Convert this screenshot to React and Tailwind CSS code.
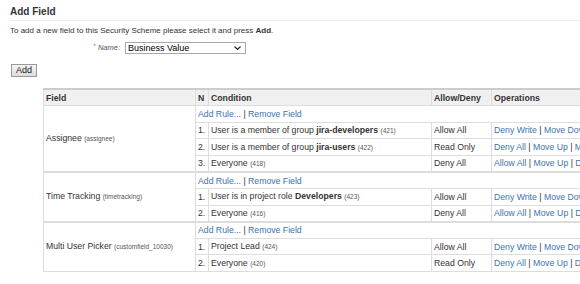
import React from 'react';

const groups = [
  {
    name: 'Assignee',
    key: 'assignee',
    rules: [
      { n: '1.', cond: <>User is a member of group <b>jira-developers</b></>, id: 421, access: 'Allow All', ops: ['Deny Write', 'Move Down', 'Delete'] },
      { n: '2.', cond: <>User is a member of group <b>jira-users</b></>, id: 422, access: 'Read Only', ops: ['Deny All', 'Move Up', 'Move Down', 'Delete'] },
      { n: '3.', cond: <>Everyone</>, id: 418, access: 'Deny All', ops: ['Allow All', 'Move Up', 'Delete'] },
    ],
  },
  {
    name: 'Time Tracking',
    key: 'timetracking',
    rules: [
      { n: '1.', cond: <>User is in project role <b>Developers</b></>, id: 423, access: 'Allow All', ops: ['Deny Write', 'Move Down', 'Delete'] },
      { n: '2.', cond: <>Everyone</>, id: 416, access: 'Deny All', ops: ['Allow All', 'Move Up', 'Delete'] },
    ],
  },
  {
    name: 'Multi User Picker',
    key: 'customfield_10030',
    rules: [
      { n: '1.', cond: <>Project Lead</>, id: 424, access: 'Allow All', ops: ['Deny Write', 'Move Down', 'Delete'] },
      { n: '2.', cond: <>Everyone</>, id: 420, access: 'Read Only', ops: ['Deny All', 'Move Up', 'Delete'] },
    ],
  },
];

function Links({ items }) {
  return (
    <span className="whitespace-nowrap">
      {items.map((t, i) => (
        <React.Fragment key={t}>
          {i > 0 && <span className="text-[#333]"> | </span>}
          <a className="text-[#3b73af]">{t}</a>
        </React.Fragment>
      ))}
    </span>
  );
}

export default function App() {
  const cell = 'border border-[#dddddd] px-[2px] h-[16.6px] py-0 leading-[12px] whitespace-nowrap overflow-hidden';
  return (
    <div className="w-[580px] h-[284px] overflow-hidden bg-white text-[#333] text-[8.7px] font-['Liberation_Sans',Arial,sans-serif]">
      <div className="pl-[10px] pt-[6px]">
        <h2 className="text-[10px] font-bold leading-[12px] text-[#333]">Add Field</h2>
        <div className="mt-[2px] border-t border-[#eeeeee]" />
        <p className="mt-[5px] text-[8px] leading-[10px]">
          To add a new field to this Security Scheme please select it and press <b>Add</b>.
        </p>
        <div className="mt-[6px] flex items-center h-[12px]">
          <label className="w-[112px] text-right pr-[2px] italic text-[7.5px] text-[#555]">
            <span className="text-[#d04437] not-italic text-[6px] align-top">*</span> Name:
          </label>
          <div className="ml-[3px] w-[121px] h-[12px] border border-[#a9a9a9] bg-white flex items-center justify-between pl-[2px] pr-[4px] text-[9px] text-black leading-none">
            <span>Business Value</span>
            <svg width="7" height="4" viewBox="0 0 7 4" fill="none" stroke="#222" strokeWidth="1.2">
              <path d="M0.5 0.5 L3.5 3.4 L6.5 0.5" />
            </svg>
          </div>
        </div>
        <button className="mt-[10px] ml-[1px] w-[26px] h-[13px] border border-[#999] bg-gradient-to-b from-[#f4f4f4] to-[#dcdcdc] text-[9px] leading-none text-[#222] flex items-center justify-center">
          Add
        </button>
      </div>
      <div className="pl-[43px] mt-[11px]">
        <table className="border-collapse w-[620px] table-fixed border-t-2 border-t-[#cccccc]">
          <colgroup>
            <col className="w-[152px]" />
            <col className="w-[13px]" />
            <col className="w-[223px]" />
            <col className="w-[60px]" />
            <col className="w-[172px]" />
          </colgroup>
          <thead>
            <tr className="bg-[#f0f0f0]">
              <th className={cell + ' text-left font-bold'}>Field</th>
              <th className={cell + ' text-left font-bold'}>N</th>
              <th className={cell + ' text-left font-bold'}>Condition</th>
              <th className={cell + ' text-left font-bold'}>Allow/Deny</th>
              <th className={cell + ' text-left font-bold'}>Operations</th>
            </tr>
          </thead>
          <tbody>
            {groups.map((g, gi) => (
              <React.Fragment key={g.key}>
                <tr className={gi > 0 ? 'border-t-2 border-t-[#dddddd]' : ''}>
                  <td rowSpan={g.rules.length + 1} className={cell + ' align-middle'}>
                    {g.name} <span className="text-[6.5px] text-[#555]">({g.key})</span>
                  </td>
                  <td colSpan={4} className={cell}>
                    <Links items={['Add Rule...', 'Remove Field']} />
                  </td>
                </tr>
                {g.rules.map((r) => (
                  <tr key={r.id}>
                    <td className={cell}>{r.n}</td>
                    <td className={cell}>
                      {r.cond} <span className="text-[6.5px] text-[#555]">({r.id})</span>
                    </td>
                    <td className={cell}>{r.access}</td>
                    <td className={cell}>
                      <Links items={r.ops} />
                    </td>
                  </tr>
                ))}
              </React.Fragment>
            ))}
          </tbody>
        </table>
      </div>
    </div>
  );
}
